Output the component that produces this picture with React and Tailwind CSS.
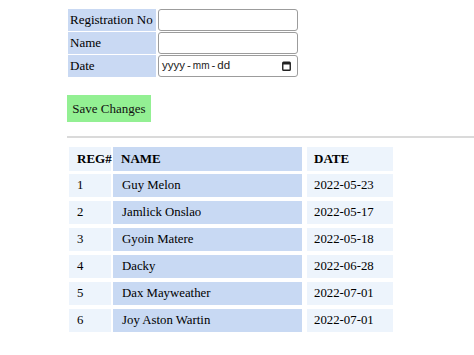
const people = [
  { id: 1, name: 'Guy Melon', date: '2022-05-23' },
  { id: 2, name: 'Jamlick Onslao', date: '2022-05-17' },
  { id: 3, name: 'Gyoin Matere', date: '2022-05-18' },
  { id: 4, name: 'Dacky', date: '2022-06-28' },
  { id: 5, name: 'Dax Mayweather', date: '2022-07-01' },
  { id: 6, name: 'Joy Aston Wartin', date: '2022-07-01' },
];

const inputCls =
  "h-[22px] border border-[#9c9c9c] rounded-[3px] bg-white px-[3px] font-['Liberation_Sans',sans-serif] text-[12px] text-[#333] outline-none";

function Label({ children }) {
  return <div className="bg-[#c9d9f3] pl-[2px] flex items-center text-[13px] h-[22px]">{children}</div>;
}

function DateField() {
  // chrome-style date input with the yyyy-mm-dd locale format
  return (
    <div className={inputCls + ' flex items-center justify-between pr-[6px]'}>
      <span className="text-[11.5px] text-[#222]">
        yyyy<span className="mx-[2px]">-</span>
        <span className="text-[10px]">mm</span>
        <span className="mx-[2px]">-</span>dd
      </span>
      <svg width="9" height="10" viewBox="0 0 9 10" fill="none">
        <rect x="0.75" y="1.25" width="7.5" height="8" rx="0.8" stroke="#222" strokeWidth="1.4" />
        <rect x="1" y="1.5" width="7" height="2" fill="#222" />
      </svg>
    </div>
  );
}

export default function App() {
  return (
    <div className="min-h-screen bg-white pt-[9px] font-['Liberation_Serif',serif] text-black">
      <div className="pl-[68px]">
        <div className="grid grid-cols-[88px_140px] gap-x-[2px] gap-y-[1px]">
          <Label>Registration No</Label>
          <input type="text" className={inputCls} />
          <Label>Name</Label>
          <input type="text" className={inputCls} />
          <Label>Date</Label>
          <DateField />
        </div>

        <button className="mt-[18px] -ml-[1px] h-[27px] w-[84px] bg-[#93f093] text-[13px] text-[#111]">
          Save Changes
        </button>
      </div>

      <div className="ml-[67px] mt-[14px] border-t-2 border-[#dadada]" />

      <div className="pl-[69px] mt-[9px] flex flex-col gap-[3px] text-[12.8px]">
        <div className="flex h-[24px] font-bold text-[13px]">
          <div className="w-[42px] bg-[#edf4fc] pl-[8px] flex items-center">REG#</div>
          <div className="ml-[2px] w-[189px] bg-[#c8d9f3] pl-[8px] flex items-center">NAME</div>
          <div className="ml-[5px] w-[86px] bg-[#edf4fc] pl-[7px] flex items-center">DATE</div>
        </div>
        <div className="flex flex-col gap-[4px]">
          {people.map((p) => (
            <div key={p.id} className="flex h-[23px]">
              <div className="w-[42px] bg-[#edf4fc] pl-[8px] flex items-center">{p.id}</div>
              <div className="ml-[2px] w-[189px] bg-[#c8d9f3] pl-[9px] flex items-center">{p.name}</div>
              <div className="ml-[5px] w-[86px] bg-[#edf4fc] pl-[7px] flex items-center">{p.date}</div>
            </div>
          ))}
        </div>
      </div>
    </div>
  );
}
